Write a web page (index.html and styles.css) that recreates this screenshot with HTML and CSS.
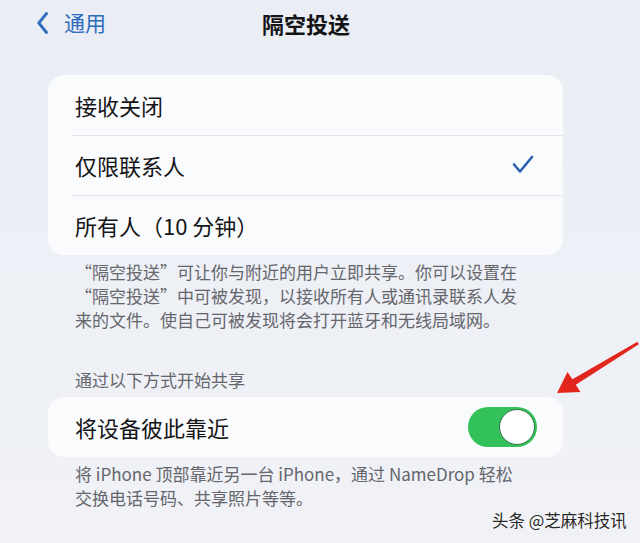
FILE: index.html
```html
<!DOCTYPE html>
<html lang="zh-CN">
<head>
  <meta charset="UTF-8" />
  <title>隔空投送</title>
  <meta name="viewport" content="width=device-width,initial-scale=1" />
  <link rel="stylesheet" href="styles.css">
</head>
<body>
  <div class="nav">
    <a class="back" href="#">
      <svg class="chevron" width="12" height="22" viewBox="0 0 12 22">
        <polyline points="9.5,1.5 1.8,11 9.5,20.5" />
      </svg>
      <span>通用</span>
    </a>
    <div class="nav-title">隔空投送</div>
  </div>

  <div class="page">
    <div class="card">
      <div class="row">接收关闭</div>
      <div class="row">
        <span>仅限联系人</span>
        <svg class="check" width="22" height="20" viewBox="0 0 22 20">
          <polyline points="2,9.5 8,16.5 20,2" />
        </svg>
      </div>
      <div class="row">所有人（10 分钟）</div>
    </div>
    <p class="note">“隔空投送”可让你与附近的用户立即共享。你可以设置在<br>“隔空投送”中可被发现，以接收所有人或通讯录联系人发<br>来的文件。使自己可被发现将会打开蓝牙和无线局域网。</p>

    <div class="section-head">通过以下方式开始共享</div>
    <div class="card">
      <div class="row">
        <span>将设备彼此靠近</span>
        <div class="toggle on"><div class="knob"></div></div>
      </div>
    </div>
    <p class="note">将 iPhone 顶部靠近另一台 iPhone，通过 NameDrop 轻松<br>交换电话号码、共享照片等等。</p>
  </div>

  <svg class="arrow" width="90" height="65" viewBox="550 335 90 65">
    <polygon points="557,393 567.5,372 572.4,379.2 637.4,341.8 638.8,344.2 575.8,384.8 580.5,392" />
  </svg>
  <div class="watermark">头条 @芝麻科技讯</div>
</body>
</html>
```

FILE: styles.css
```css
:root {
  --bg: #eceff5;
  --card: #fafbfd;
  --ios-blue: #2e6cbe;
  --ios-green: #33c15a;
  --text: #141416;
  --muted: #65666c;
  --line: #e2e4ea;
}
body {
  margin: 0;
  background: linear-gradient(#eaedf4, #f0f2f7);
  min-height: 543px;
  font-family: "Noto Sans CJK SC", "Noto Sans", sans-serif;
  color: var(--text);
  position: relative;
  overflow: hidden;
}
.nav {
  height: 45px;
  display: flex;
  align-items: center;
  padding-left: 37px;
}
.back {
  display: flex;
  align-items: center;
  gap: 15px;
  color: var(--ios-blue);
  text-decoration: none;
  font-size: 21px;
  line-height: 1;
  width: 225px;
}
.chevron polyline {
  fill: none;
  stroke: var(--ios-blue);
  stroke-width: 2.8;
  stroke-linecap: round;
  stroke-linejoin: round;
}
.nav-title {
  font-size: 22px;
  font-weight: 700;
  line-height: 1;
}
.page {
  padding: 0 77px 0 48px;
}
.card {
  background: var(--card);
  border-radius: 16px;
  margin-top: 30px;
}
.row {
  height: 60px;
  display: flex;
  align-items: center;
  justify-content: space-between;
  padding: 0 26px 0 27px;
  font-size: 22px;
  position: relative;
}
.row + .row::before {
  content: "";
  position: absolute;
  left: 23px;
  right: 0;
  top: 0;
  border-top: 1px solid var(--line);
}
.check {
  margin-right: 3px;
}
.check polyline {
  fill: none;
  stroke: #2b63b3;
  stroke-width: 2.6;
  stroke-linecap: round;
  stroke-linejoin: round;
}
.note {
  margin: 6px 0 0 0;
  padding-left: 27px;
  font-size: 17px;
  line-height: 23.5px;
  color: var(--muted);
  white-space: nowrap;
}
.section-head {
  margin-top: 36px;
  padding-left: 27px;
  font-size: 17px;
  line-height: 24px;
  color: var(--muted);
}
.section-head + .card {
  margin-top: 5px;
}
.card + .note {
  margin-top: 5px;
  line-height: 24px;
}
.toggle {
  width: 69px;
  height: 40px;
  border-radius: 20px;
  background: #d9dade;
  position: relative;
}
.toggle.on {
  background: var(--ios-green);
}
.knob {
  position: absolute;
  top: 2px;
  right: 2px;
  width: 34px;
  height: 34px;
  border-radius: 50%;
  background: #fff;
  border: 1px solid #2f6e45;
}
.arrow {
  position: absolute;
  left: 550px;
  top: 335px;
}
.arrow polygon {
  fill: #e2261e;
}
.watermark {
  position: absolute;
  left: 492px;
  top: 510px;
  font-size: 16.5px;
  line-height: 20px;
  color: #262626;
  text-shadow: 0 0 2px #fff, 0 0 2px #fff;
  white-space: nowrap;
}
```
